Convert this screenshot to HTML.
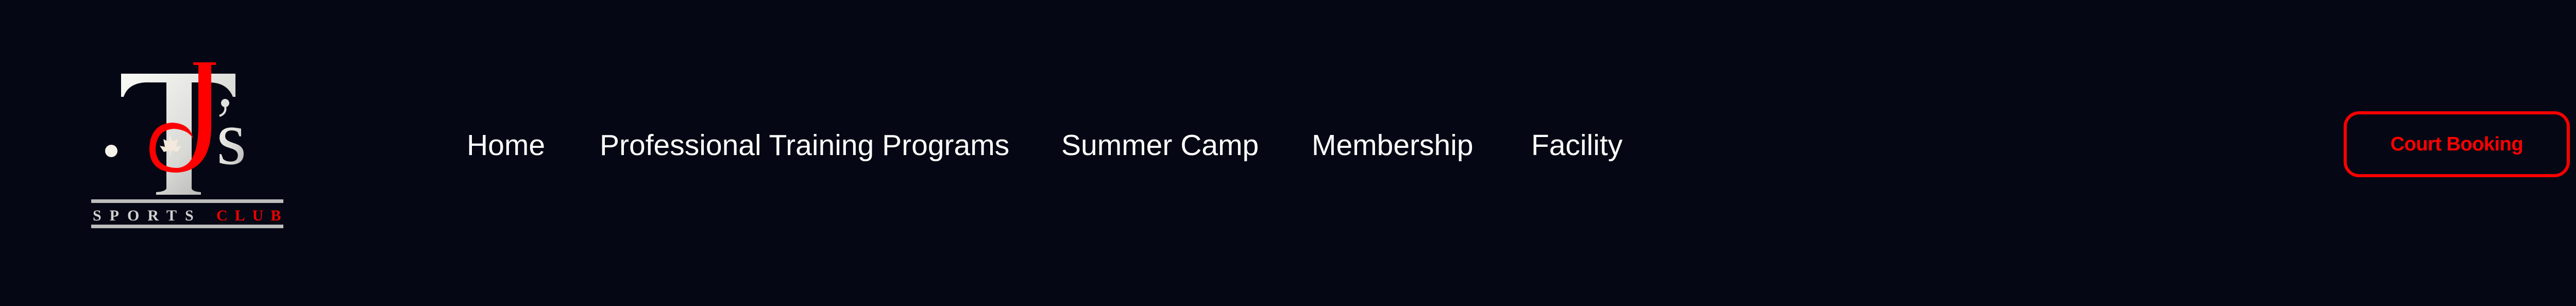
<!DOCTYPE html>
<html><head><meta charset="utf-8"><style>
html,body{margin:0;padding:0;}
body{width:5184px;height:594px;background:#050814;position:relative;overflow:hidden;font-family:"Liberation Sans",sans-serif;}
.nav{position:absolute;top:247px;color:#fff;font-size:57px;line-height:70px;white-space:nowrap;letter-spacing:0px;}
.btn{position:absolute;left:4549px;top:216px;width:427px;height:116px;border:6px solid #f00;border-radius:30px;color:#f00;font-size:38px;font-weight:bold;display:flex;align-items:center;justify-content:center;letter-spacing:-0.5px;}
</style></head><body>
<svg style="position:absolute;left:0;top:0" width="700" height="594" viewBox="0 0 700 594">
<defs>
<linearGradient id="g" x1="0" y1="0" x2="1" y2="1"><stop offset="0" stop-color="#fafaf6"/><stop offset="0.6" stop-color="#d9d9d6"/><stop offset="1" stop-color="#a8a8a8"/></linearGradient>
</defs>
<path d="M235 143 H457 V188 L452 188 Q440 158 400 160 H372 V366 Q374 372 390 373 V378 H303 V373 Q320 372 323 366 V160 H292 Q250 158 240 188 H235 Z" fill="url(#g)"/>
<circle cx="216" cy="293" r="12" fill="#f6f3ea"/>
<path d="M375 121 H419 V126 H410 V250 Q408 330 345 335 Q290 336 290 288 Q292 240 335 238 Q370 240 375 270 Q366 252 338 250 Q303 252 302 290 Q304 326 345 326 Q383 322 385 250 V126 H375 Z" fill="#f00"/>
<path d="M330 263 L335 275 L345 270 L342 285 L352 283 L344 295 L333 292 L331 305 L329 292 L318 295 L310 283 L320 285 L317 270 L327 275 Z" fill="#f3e9dc"/>
<circle cx="437" cy="200" r="8" fill="#e0e0de"/>
<path d="M437 206 Q440 220 426 225" stroke="#e0e0de" stroke-width="4" fill="none"/>
<text x="420" y="318" font-family="Liberation Serif,serif" font-size="150" fill="url(#g)">s</text>
<rect x="177" y="387" width="373" height="7" fill="#bdbdbd"/>
<rect x="177" y="436" width="373" height="7" fill="#bdbdbd"/>
<text x="180" y="428" font-family="Liberation Serif,serif" font-weight="bold" font-size="30" fill="#cfcfcf" letter-spacing="16">SPORTS</text>
<text x="420" y="428" font-family="Liberation Serif,serif" font-weight="bold" font-size="30" fill="#e00" letter-spacing="14">CLUB</text>
</svg>
<div class="nav" style="left:906px">Home</div>
<div class="nav" style="left:1164px">Professional Training Programs</div>
<div class="nav" style="left:2060px">Summer Camp</div>
<div class="nav" style="left:2546px">Membership</div>
<div class="nav" style="left:2972px">Facility</div>
<div class="btn">Court Booking</div>
</body></html>
